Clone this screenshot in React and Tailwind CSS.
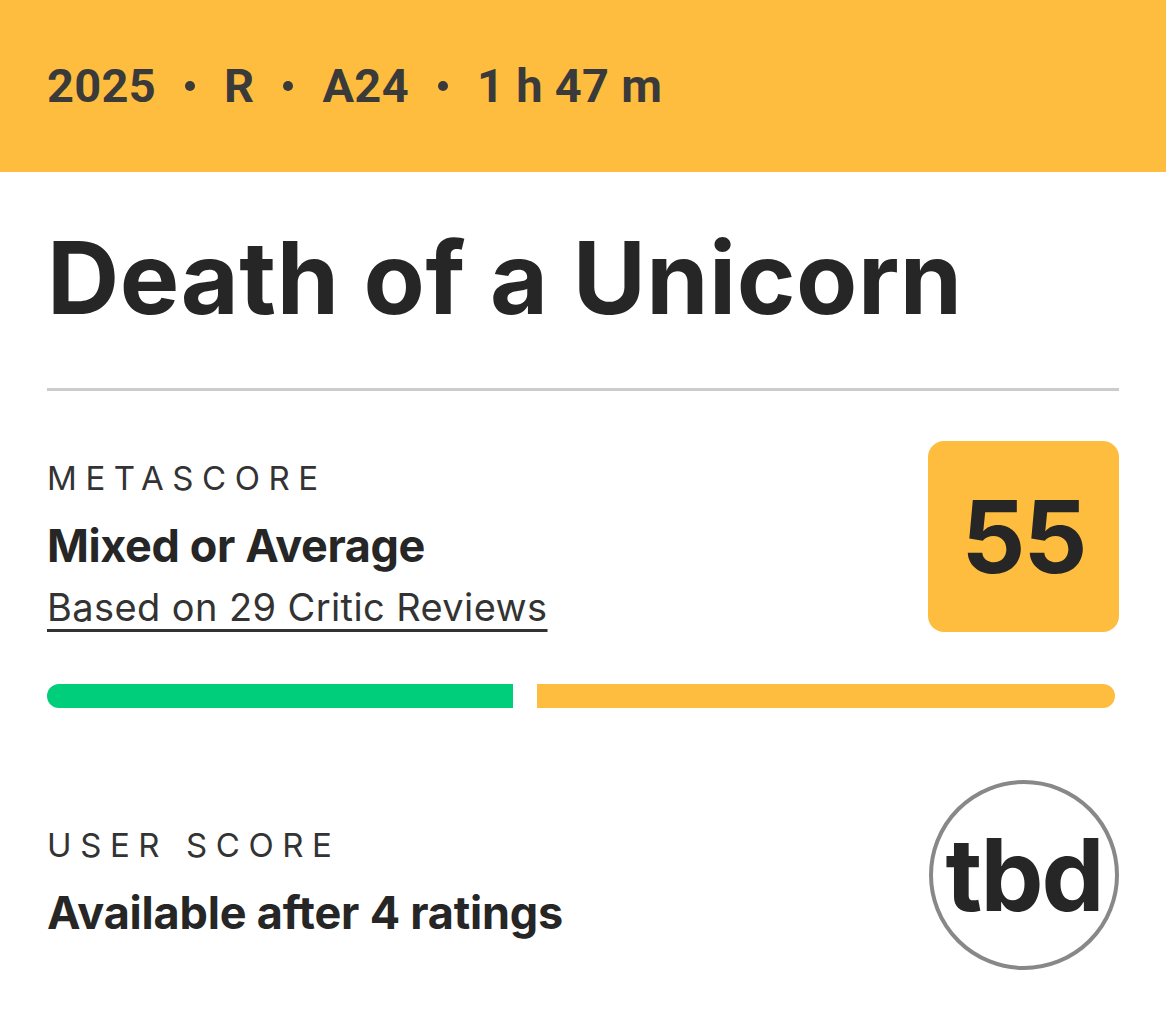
import React from "react";

const meta = ["2025", "R", "A24", "1 h 47 m"];

export default function App() {
  return (
    <div className="w-[1166px] h-[1024px] bg-white font-['Inter',sans-serif] text-[#262626] overflow-hidden">
      <div className="h-[172px] bg-[#ffbd3f] flex items-center pl-[47px] font-['Roboto',sans-serif] font-bold text-[47px] text-[#3a3a3a]">
        {meta.map((item, i) => (
          <React.Fragment key={item}>
            {i > 0 && (
              <span className="mx-[29px] w-[10px] h-[10px] rounded-full bg-[#3a3a3a]"></span>
            )}
            <span className="tracking-[0.3px]">{item}</span>
          </React.Fragment>
        ))}
      </div>

      <div className="px-[47px]">
        <h1 className="mt-[56px] text-[100px] font-bold leading-none tracking-[0.5px]">
          Death of a Unicorn
        </h1>
        <div className="mt-[60px] h-[3px] bg-[#cccccc]"></div>

        <div className="mt-[50px] flex justify-between items-start">
          <div className="pt-[21px]">
            <div className="text-[33px] leading-none tracking-[0.26em] text-[#333]">
              METASCORE
            </div>
            <div className="mt-[28px] text-[45px] font-bold leading-none tracking-[-0.4px]">
              Mixed or Average
            </div>
            <a className="mt-[20px] block text-[38px] leading-none text-[#333] tracking-[0.4px] underline underline-offset-[8px] decoration-[3px]">
              Based on 29 Critic Reviews
            </a>
          </div>
          <div className="w-[191px] h-[191px] rounded-[16px] bg-[#ffbd3f] flex items-center justify-center text-[100px] font-bold tracking-[-2px]">
            55
          </div>
        </div>

        <div className="mt-[52px] flex gap-[24px] h-[24px]">
          <div className="w-[466px] bg-[#00ce7a] rounded-l-full"></div>
          <div className="w-[578px] bg-[#ffbd3f] rounded-r-full"></div>
        </div>

        <div className="mt-[72px] flex justify-between items-center">
          <div className="pt-[14px]">
            <div className="text-[33px] leading-none tracking-[0.26em] text-[#333]">
              USER SCORE
            </div>
            <div className="mt-[28px] text-[45px] font-bold leading-none tracking-[-0.2px]">
              Available after 4 ratings
            </div>
          </div>
          <div className="w-[190px] h-[190px] rounded-full border-[4px] border-[#888] flex items-center justify-center text-[100px] font-bold leading-none tracking-[-2px]">
            tbd
          </div>
        </div>
      </div>
    </div>
  );
}
